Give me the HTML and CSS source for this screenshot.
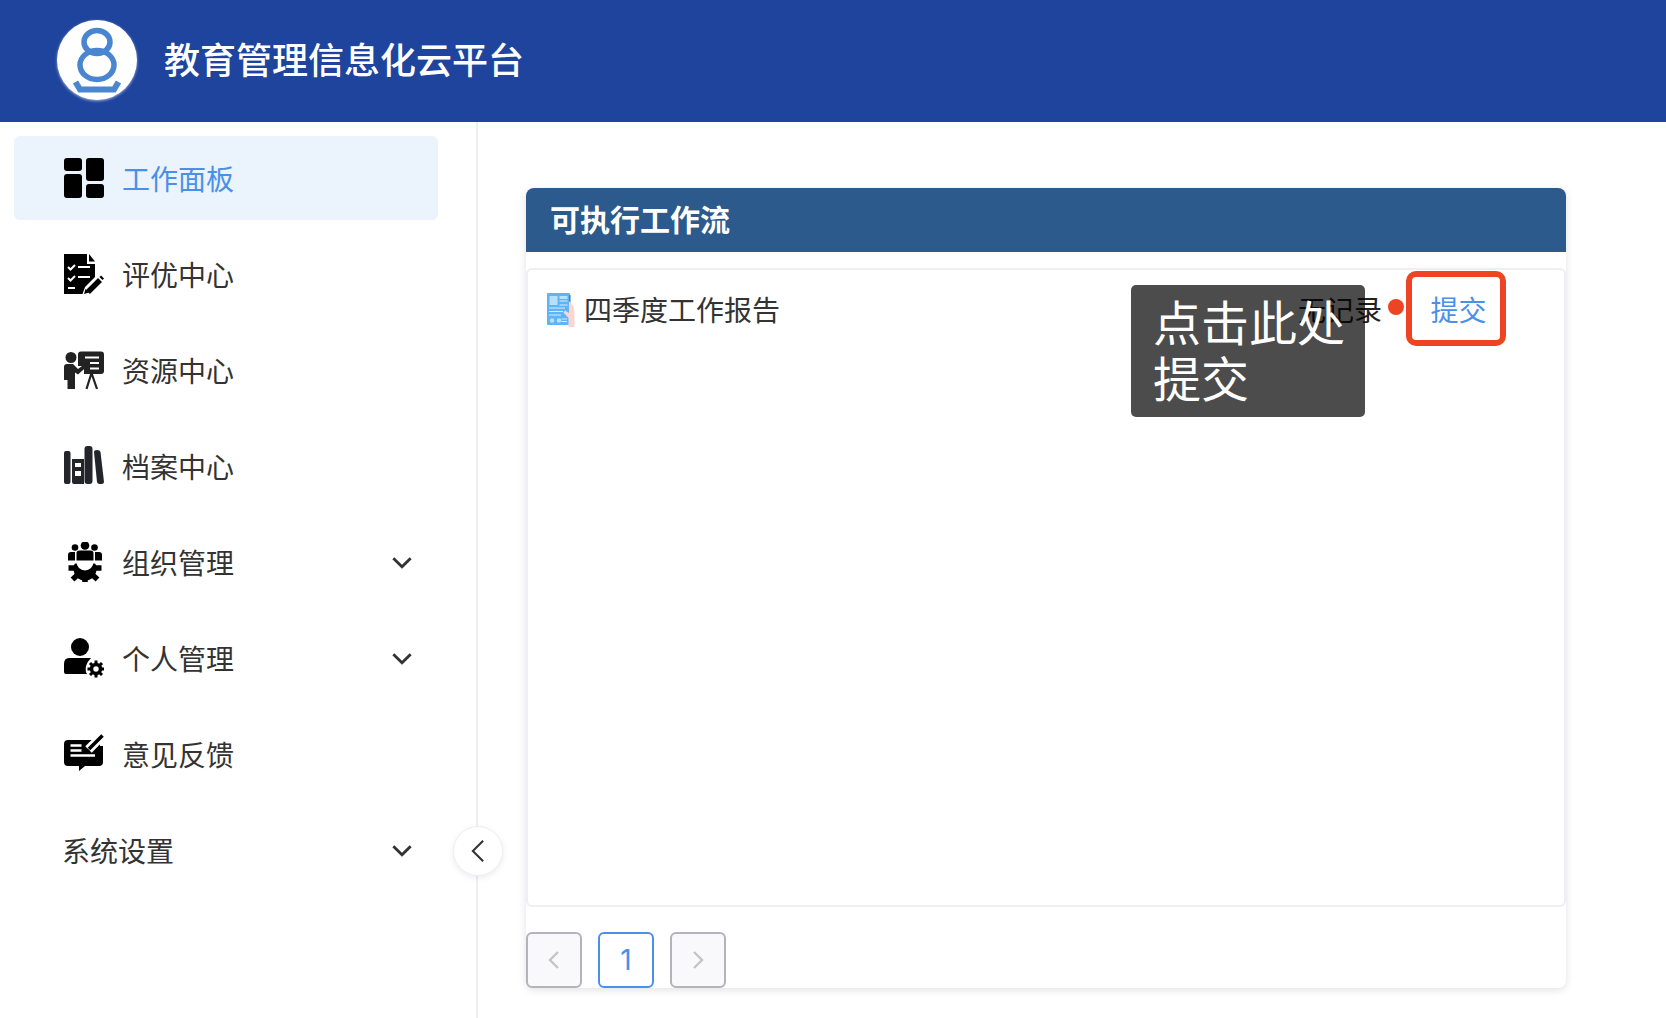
FILE: index.html
```html
<!DOCTYPE html>
<html lang="zh-CN">
<head>
<meta charset="utf-8">
<title>教育管理信息化云平台</title>
<link rel="stylesheet" href="styles.css">
</head>
<body>
<header class="topbar">
  <div class="logo">
    <svg viewBox="0 0 80 80" width="80" height="80">
      <g fill="none" stroke="#4a86d0" stroke-width="5.500">
        <ellipse cx="40" cy="22" rx="13" ry="11.500"/>
        <ellipse cx="40" cy="45" rx="17" ry="14.500"/>
        <path d="M18.500 62l4.500 7.500h34l4.500-7.500" stroke-width="6"/>
      </g>
    </svg>
  </div>
  <h1 class="brand">教育管理信息化云平台</h1>
</header>
<div class="layout">
  <aside class="sidebar">
    <nav class="nav">
      <a class="nav-item active">
        <svg class="nav-icon" viewBox="0 0 40 40"><g fill="#000"><rect x="0" y="0" width="18" height="13" rx="3"/><rect x="0" y="16" width="18" height="24" rx="3"/><rect x="22" y="0" width="18" height="23" rx="3"/><rect x="22" y="26" width="18" height="14" rx="3"/></g></svg>
        <span class="nav-label">工作面板</span>
      </a>
      <a class="nav-item">
        <svg class="nav-icon" viewBox="0 0 40 40">
          <path d="M0 0H23V10H31V23L21 33L18.500 40H0Z" fill="#000"/>
          <path d="M25 0L31 7.500H25Z" fill="#000"/>
          <g fill="none" stroke="#fff" stroke-width="2">
            <path d="M4 13l2.500 2.500L11 11"/><path d="M14 13H26"/>
            <path d="M4 24l2.500 2.500L11 22"/><path d="M14 23H26"/>
            <path d="M4 34H11"/>
          </g>
          <path d="M24 38L36 26" stroke="#000" stroke-width="5.500" fill="none"/>
          <path d="M35.500 23l1.500-1.500 3 3-1.500 1.500z" fill="#000"/>
          <path d="M21.500 35l3.500 3.500-5 1.500z" fill="#000"/>
        </svg>
        <span class="nav-label">评优中心</span>
      </a>
      <a class="nav-item">
        <svg class="nav-icon" viewBox="0 0 40 40">
          <rect x="14" y="1.500" width="26" height="22.500" rx="3" fill="#222"/>
          <path d="M13 16H20L20 26H13Z" fill="#fff"/>
          <g fill="none" stroke="#fff" stroke-width="2"><path d="M21 7.500H35"/><path d="M26 13H35"/><path d="M26 18.500H35"/></g>
          <circle cx="7" cy="7.500" r="5.500" fill="#222"/>
          <path d="M3 14h6l5 5 8-6 2 2.500-10 9-3-2V39H3.500V30H0V17q0-3 3-3z" fill="#222"/>
          <path d="M27.500 23L22.500 39M27.500 23L33 39" stroke="#222" stroke-width="2.200" fill="none"/>
        </svg>
        <span class="nav-label">资源中心</span>
      </a>
      <a class="nav-item">
        <svg class="nav-icon" viewBox="0 0 40 40" fill="#23252a">
          <rect x="0" y="5" width="6.500" height="33" rx="2"/>
          <path d="M8 13H20V38H10Q8 38 8 36ZM11 17V21H17V17ZM11 25V30H17V25Z" fill-rule="evenodd"/>
          <rect x="20.500" y="0" width="8" height="38" rx="3"/>
          <path d="M30 6q0-2 3-2t3.500 2L40 36q0 2-2.500 2h-2q-2 0-2.500-2Z"/>
        </svg>
        <span class="nav-label">档案中心</span>
      </a>
      <a class="nav-item">
        <svg class="nav-icon" viewBox="0 0 40 40" fill="#000">
          <g stroke="#000" stroke-width="5.500">
            <path d="M21 26V40"/><path d="M21 26L8.500 37.500"/><path d="M21 26L33.500 37.500"/><path d="M21 26H4.500"/><path d="M21 26H37.500"/>
          </g>
          <circle cx="21" cy="27" r="11.500"/>
          <circle cx="21" cy="20" r="8.500" fill="#fff"/>
          <rect x="3" y="18.500" width="36" height="3" fill="#fff"/>
          <circle cx="11" cy="5.500" r="3.300"/><circle cx="21" cy="3.500" r="4.300"/><circle cx="30.500" cy="5.500" r="3.300"/>
          <path d="M4 18.500V13q0-3 3-3h4v8.500Z"/>
          <path d="M38 18.500V13q0-3-3-3h-4v8.500Z"/>
          <path d="M12.500 18.500V11q0-2.500 3-2.500h11q3 0 3 2.500v7.500Z"/>
        </svg>
        <span class="nav-label">组织管理</span>
        <svg class="chevron" viewBox="0 0 20 12"><path d="M2 2l8 8 8-8"/></svg>
      </a>
      <a class="nav-item">
        <svg class="nav-icon" viewBox="0 0 40 40" fill="#000">
          <circle cx="16" cy="9" r="9"/>
          <path d="M5 20H27Q23 24 22 28Q21 33 23 36H2Q0 36 0 34V26Q0 20 5 20Z"/>
          <path d="M32 22.500v17M23.500 31h17M26 25l12 12M38 25L26 37" stroke="#000" stroke-width="3"/>
          <circle cx="32" cy="31" r="4.500" fill="none" stroke="#000" stroke-width="3.500"/>
          <circle cx="32" cy="31" r="2.700" fill="#fff"/>
        </svg>
        <span class="nav-label">个人管理</span>
        <svg class="chevron" viewBox="0 0 20 12"><path d="M2 2l8 8 8-8"/></svg>
      </a>
      <a class="nav-item">
        <svg class="nav-icon" viewBox="0 0 40 40" fill="#000">
          <path d="M4 6H39V28Q39 32 35 32H21L15 37V32H4Q0 32 0 28V10Q0 6 4 6Z"/>
          <path d="M24.500 15.500L38 2" stroke="#fff" stroke-width="9" fill="none"/>
          <path d="M36 6H40V12H36Z" fill="#fff"/>
          <path d="M25 15L38.500 1.500" stroke="#000" stroke-width="3.500" fill="none"/>
          <path d="M22.500 18.500l1-4 3 3z"/>
          <path d="M6.500 11.500H17.500M6.500 16.500H17.500M6.500 21.500H31" stroke="#fff" stroke-width="2.500" fill="none"/>
        </svg>
        <span class="nav-label">意见反馈</span>
      </a>
      <a class="nav-item plain">
        <span class="nav-label">系统设置</span>
        <svg class="chevron" viewBox="0 0 20 12"><path d="M2 2l8 8 8-8"/></svg>
      </a>
    </nav>
    <button class="collapse" aria-label="收起">
      <svg viewBox="0 0 16 28" width="14" height="24"><path d="M14 2L2 14l12 12"/></svg>
    </button>
  </aside>
  <main class="main">
    <section class="card">
      <h2 class="card-title">可执行工作流</h2>
      <div class="list">
        <div class="row">
          <svg class="doc-icon" viewBox="6 5 28 34">
            <rect x="6" y="5" width="23" height="32" rx="1" fill="#5fb4f5"/>
            <rect x="28" y="7" width="1.500" height="8" fill="#2f7fc4"/>
            <rect x="8.500" y="8" width="8" height="9" fill="#b8e0fb"/>
            <rect x="18.500" y="8" width="8" height="3" fill="#b8e0fb"/>
            <path d="M18.500 13H26.500M18.500 17H26.500M8 20H24M8 23.500H22M8 27H20M20.500 31H26M20.500 33.500H26" stroke="#d6eefc" stroke-width="1.200" fill="none"/>
            <circle cx="11" cy="32.500" r="2.300" fill="#b8e0fb"/>
            <circle cx="18" cy="32.500" r="2.300" fill="#b8e0fb"/>
            <path d="M28 13Q33 17 33.500 24V39H27.500V30L22.500 24.500L24 22.500L28 25Z" fill="#fbd5cf"/>
          </svg>
          <span class="row-name">四季度工作报告</span>
          <span class="row-status">无记录</span>
          <span class="row-dot"></span>
          <a class="row-action">提交</a>
          <div class="tip">点击此处提交</div>
        </div>
      </div>
      <div class="pager">
        <button class="page-btn disabled"><svg viewBox="0 0 12 20" width="12" height="20"><path d="M10 2L2 10l8 8"/></svg></button>
        <button class="page-btn current">1</button>
        <button class="page-btn disabled"><svg viewBox="0 0 12 20" width="12" height="20"><path d="M2 2l8 8-8 8"/></svg></button>
      </div>
    </section>
  </main>
</div>
</body>
</html>
```
FILE: styles.css
```css
* { box-sizing: border-box; }
html, body { height: 100%; }
body {
  margin: 0;
  overflow: hidden;
  background: #fff;
  color: #333;
  font-family: "Noto Sans CJK SC", "Noto Sans", sans-serif;
}
.topbar {
  height: 122px;
  background: #1e449e;
  display: flex;
  align-items: center;
  padding-left: 57px;
  gap: 27px;
}
.logo {
  width: 80px;
  height: 80px;
  margin-bottom: 2px;
  border-radius: 50%;
  background: #fff;
  box-shadow: 0 1px 3px rgba(255, 255, 255, .6);
  flex: none;
}
.logo svg { display: block; }
.brand {
  margin: 0 0 6px;
  color: #fff;
  font-size: 36px;
  font-weight: 500;
  line-height: 1;
}
.layout {
  display: flex;
  height: 896px;
}
.sidebar {
  position: relative;
  width: 478px;
  flex: none;
  border-right: 2px solid #eeeef3;
  padding: 14px 38px 0 14px;
}
.nav {
  display: flex;
  flex-direction: column;
  gap: 12px;
}
.nav-item {
  height: 84px;
  display: flex;
  align-items: center;
  padding: 0 25px 0 50px;
  border-radius: 6px;
  color: #333;
  font-size: 28px;
}
.nav-item.active {
  background: #ebf3fd;
  color: #4a90e8;
}
.nav-item.plain { padding-left: 48px; }
.nav-icon {
  width: 40px;
  height: 40px;
  margin-right: 18px;
  flex: none;
}
.nav-label { flex: 1; line-height: 1; }
.chevron {
  width: 22px;
  height: 13px;
  fill: none;
  stroke: #333;
  stroke-width: 2.600;
  flex: none;
}
.collapse {
  position: absolute;
  left: 453px;
  top: 704px;
  width: 50px;
  height: 50px;
  padding: 0;
  border: 1px solid #eeeef3;
  border-radius: 50%;
  background: #fff;
  box-shadow: 0 2px 6px rgba(0, 0, 0, .08);
  display: flex;
  align-items: center;
  justify-content: center;
}
.collapse svg { fill: none; stroke: #333; stroke-width: 2.400; }
.main {
  flex: 1;
  padding: 66px 0 0 48px;
}
.card {
  width: 1040px;
  height: 800px;
  border-radius: 8px;
  background: #fff;
  box-shadow: 0 2px 8px rgba(0, 0, 0, .12);
  display: flex;
  flex-direction: column;
}
.card-title {
  margin: 0;
  height: 64px;
  flex: none;
  padding: 0 0 4px 24px;
  display: flex;
  align-items: center;
  background: #2c5a8d;
  border-radius: 8px 8px 0 0;
  color: #fff;
  font-size: 30px;
  font-weight: 700;
}
.list {
  margin-top: 16px;
  height: 639px;
  flex: none;
  border: 2px solid #eeeef4;
  border-radius: 6px;
  padding: 1px 58px 0 19px;
}
.row {
  position: relative;
  display: flex;
  align-items: center;
  height: 75px;
  color: #333;
  font-size: 28px;
}
.doc-icon {
  width: 28px;
  height: 34px;
  margin-right: 9px;
  margin-top: 3px;
  flex: none;
}
.row-name { flex: 1; }
.row-status { color: #222; }
.row-dot {
  width: 16px;
  height: 16px;
  margin: 0 2px 3px 6px;
  border-radius: 50%;
  background: #ef4423;
}
.row-action {
  width: 100px;
  height: 75px;
  padding-left: 5px;
  border: 6px solid #ef4423;
  border-radius: 10px;
  display: flex;
  align-items: center;
  justify-content: center;
  color: #4a90e8;
}
.tip {
  position: absolute;
  left: 584px;
  top: 14px;
  width: 234px;
  height: 132px;
  padding: 7px 16px 7px 22px;
  border-radius: 5px;
  background: rgba(0, 0, 0, .7);
  color: #fff;
  font-size: 48px;
  line-height: 56px;
}
.pager {
  display: flex;
  gap: 16px;
  margin-top: 25px;
}
.page-btn {
  width: 56px;
  height: 56px;
  padding: 0;
  border: 2px solid #b4b2bc;
  border-radius: 6px;
  background: #f9f9fc;
  display: flex;
  align-items: center;
  justify-content: center;
  font-family: "Inter", "Noto Sans", sans-serif;
  font-size: 28px;
}
.page-btn svg { fill: none; stroke: #c4c4c8; stroke-width: 2.400; }
.page-btn.current {
  border-color: #4a90e8;
  background: #fff;
  color: #4a90e8;
}
```
